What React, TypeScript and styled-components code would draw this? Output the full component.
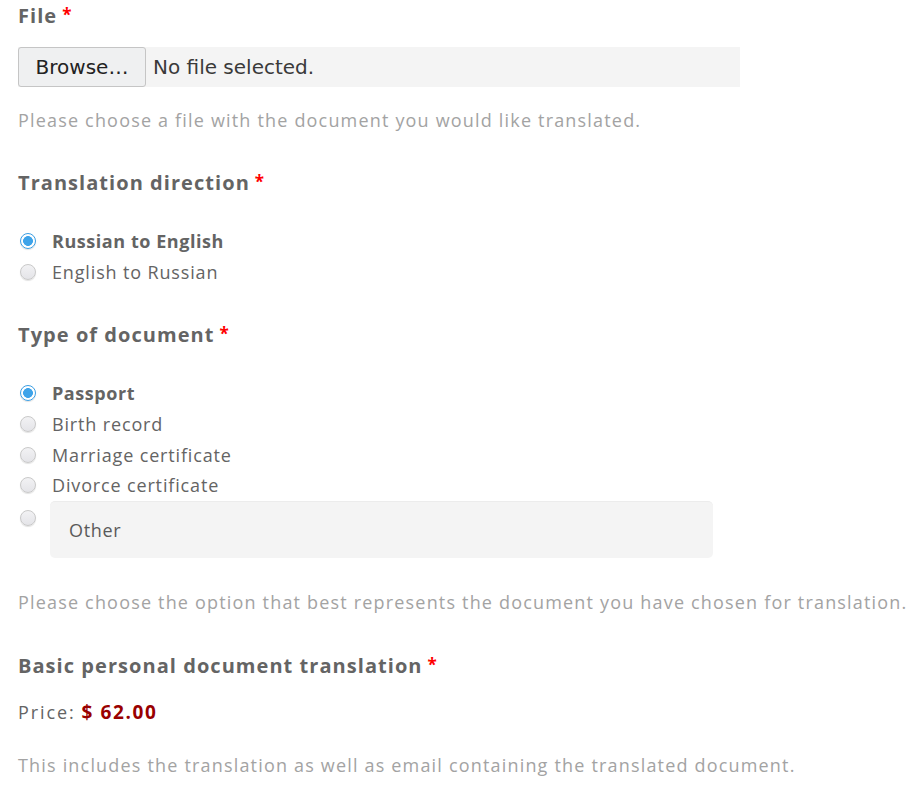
import React from "react";
import styled, { createGlobalStyle } from "styled-components";

const Global = createGlobalStyle`
  html, body { margin: 0; padding: 0; background: #fff; }
  body { font-family: "Open Sans", "Noto Sans", sans-serif; }
`;

const Form = styled.form`
  padding: 0 18px;
  display: flex;
  flex-direction: column;
`;

const Heading = styled.div<{ $mt?: number }>`
  font-size: 20px;
  line-height: 30px;
  font-weight: 700;
  letter-spacing: 1.05px;
  color: #646464;
  margin-top: ${(p) => p.$mt ?? 0}px;
`;

const Req = styled.span`
  color: #f00;
  font-size: 17px;
  margin-left: 5px;
  vertical-align: 2px;
`;

const FileBox = styled.div`
  margin-top: 16px;
  width: 722px;
  height: 40px;
  background: #f4f4f4;
  display: flex;
  align-items: center;
  font-family: "DejaVu Sans", sans-serif;
  font-size: 20px;
`;

const BrowseButton = styled.button`
  height: 40px;
  width: 128px;
  box-sizing: border-box;
  border: 1px solid #c5c5c5;
  border-radius: 3px;
  background: #eff0f1;
  color: #222;
  font: inherit;
  padding: 0;
`;

const FileName = styled.span`
  margin-left: 7px;
  color: #3a3a3a;
`;

const Help = styled.div<{ $mt: number }>`
  font-size: 18px;
  line-height: 27px;
  letter-spacing: 1.18px;
  white-space: nowrap;
  color: #a3a3a3;
  margin-top: ${(p) => p.$mt}px;
`;

const Options = styled.div<{ $mt: number }>`
  margin-top: ${(p) => p.$mt}px;
  display: flex;
  flex-direction: column;
`;

const Option = styled.label<{ $h?: number }>`
  display: flex;
  align-items: center;
  height: ${(p) => p.$h ?? 30.7}px;
`;

const Radio = styled.span<{ $on?: boolean }>`
  flex: none;
  width: 16px;
  height: 16px;
  box-sizing: border-box;
  border-radius: 50%;
  margin-left: 2px;
  margin-right: 16px;
  border: 1px solid ${(p) => (p.$on ? "#3b9ee3" : "#c9c9c9")};
  background: ${(p) =>
    p.$on
      ? "radial-gradient(circle, #3ea3e9 0 4.6px, #fff 5.2px)"
      : "linear-gradient(#f2f2f4, #e4e4e8)"};
  box-shadow: 0 1px 1px rgba(0, 0, 0, 0.12);
`;

const OptionText = styled.span<{ $bold?: boolean }>`
  font-size: 18px;
  font-weight: ${(p) => (p.$bold ? 700 : 400)};
  letter-spacing: ${(p) => (p.$bold ? 0.55 : 0.85)}px;
  color: #646464;
`;

const OtherRow = styled.div`
  display: flex;
  align-items: flex-start;
`;

const OtherRadio = styled(Radio)`
  margin-top: 9px;
  margin-right: 14px;
`;

const OtherInput = styled.div`
  width: 663px;
  height: 57px;
  box-sizing: border-box;
  background: #f4f4f4;
  border-radius: 5px;
  border-top: 1px solid #ececec;
  display: flex;
  align-items: center;
  padding-left: 19px;
  font-size: 18px;
  letter-spacing: 0.7px;
  color: #5a5a5a;
`;

const Price = styled.div`
  margin-top: 18px;
  font-size: 18px;
  line-height: 27px;
  letter-spacing: 1.9px;
  color: #646464;
`;

const Amount = styled.span`
  color: #990000;
  font-weight: 700;
  font-size: 19px;
  letter-spacing: 1.6px;
  margin-left: 6px;
`;

export default function App() {
  return (
    <>
      <Global />
      <Form>
        <Heading>
          File<Req>*</Req>
        </Heading>
        <FileBox>
          <BrowseButton type="button">Browse…</BrowseButton>
          <FileName>No file selected.</FileName>
        </FileBox>
        <Help $mt={20}>Please choose a file with the document you would like translated.</Help>

        <Heading $mt={33}>
          Translation direction<Req>*</Req>
        </Heading>
        <Options $mt={27}>
          <Option $h={31}>
            <Radio $on />
            <OptionText $bold>Russian to English</OptionText>
          </Option>
          <Option $h={31}>
            <Radio />
            <OptionText>English to Russian</OptionText>
          </Option>
        </Options>

        <Heading $mt={32}>
          Type of document<Req>*</Req>
        </Heading>
        <Options $mt={28}>
          <Option>
            <Radio $on />
            <OptionText $bold>Passport</OptionText>
          </Option>
          <Option>
            <Radio />
            <OptionText>Birth record</OptionText>
          </Option>
          <Option>
            <Radio />
            <OptionText>Marriage certificate</OptionText>
          </Option>
          <Option>
            <Radio />
            <OptionText>Divorce certificate</OptionText>
          </Option>
          <OtherRow>
            <OtherRadio />
            <OtherInput>Other</OtherInput>
          </OtherRow>
        </Options>
        <Help $mt={31}>
          Please choose the option that best represents the document you have chosen for translation.
        </Help>

        <Heading $mt={34}>
          Basic personal document translation<Req>*</Req>
        </Heading>
        <Price>
          Price:<Amount>$ 62.00</Amount>
        </Price>
        <Help $mt={26}>This includes the translation as well as email containing the translated document.</Help>
      </Form>
    </>
  );
}
